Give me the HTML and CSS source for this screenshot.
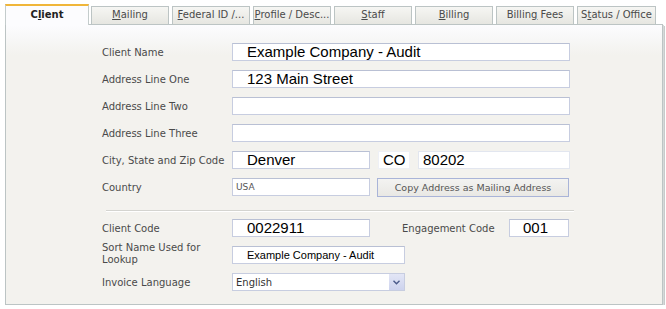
FILE: index.html
```html
<!DOCTYPE html>
<html lang="en">
<head>
  <meta charset="UTF-8" />
  <title>Client</title>
  <link rel="stylesheet" href="styles.css">
</head>
<body>
  <div class="window">
    <div class="tabs">
      <div class="tab active">C<u>l</u>ient</div>
      <div class="tab"><u>M</u>ailing</div>
      <div class="tab"><u>F</u>ederal ID /...</div>
      <div class="tab"><u>P</u>rofile / Desc...</div>
      <div class="tab"><u>S</u>taff</div>
      <div class="tab"><u>B</u>illing</div>
      <div class="tab">Billin<u>g</u> Fees</div>
      <div class="tab">S<u>t</u>atus / Office</div>
    </div>

    <div class="panel">
      <div class="form">
        <div class="row">
          <label>Client Name</label>
          <div class="field big w-full">Example Company - Audit</div>
        </div>
        <div class="row">
          <label>Address Line One</label>
          <div class="field big w-full">123 Main Street</div>
        </div>
        <div class="row">
          <label>Address Line Two</label>
          <div class="field w-full"></div>
        </div>
        <div class="row">
          <label>Address Line Three</label>
          <div class="field w-full"></div>
        </div>
        <div class="row">
          <label>City, State and Zip Code</label>
          <div class="field big w-half">Denver</div>
          <div class="field big state">CO</div>
          <div class="field big zip">80202</div>
        </div>
        <div class="row">
          <label>Country</label>
          <div class="field small w-half">USA</div>
          <button class="copy-btn">Copy Address as Mailing Address</button>
        </div>

        <div class="separator"></div>

        <div class="row">
          <label>Client Code</label>
          <div class="field big w-half">0022911</div>
          <label class="eng-label">Engagement Code</label>
          <div class="field big eng">001</div>
        </div>
        <div class="row">
          <label class="two-line">Sort Name Used for Lookup</label>
          <div class="field sort w-sort">Example Company - Audit</div>
        </div>
        <div class="row">
          <label>Invoice Language</label>
          <div class="select w-sort">
            <span class="select-text">English</span>
            <span class="select-arrow">
              <svg width="7" height="5" viewBox="0 0 7 5"><path d="M0.5 0.8 L3.5 3.8 L6.5 0.8" fill="none" stroke="#4a5a8a" stroke-width="1.4"/></svg>
            </span>
          </div>
        </div>
      </div>
    </div>
  </div>
</body>
</html>
```

FILE: styles.css
```css
body {
  margin: 0;
  background: #ffffff;
  font-family: "DejaVu Sans", Verdana, sans-serif;
  font-size: 10px;
  color: #3c3c3c;
}

.window {
  padding: 4px 4px 0 5px;
  width: 658px;
}

.tabs {
  display: flex;
  align-items: flex-end;
  height: 20px;
  padding-left: 0;
}

.tab {
  box-sizing: border-box;
  height: 18px;
  width: 78px;
  margin-right: 3px;
  border: 1px solid #bcc4c4;
  border-bottom: none;
  background: linear-gradient(#f6f6f3, #e6e6e1);
  text-align: center;
  line-height: 16px;
  font-size: 10px;
  color: #4a4a4a;
  white-space: nowrap;
  overflow: hidden;
}

.tab.active {
  width: 84px;
  height: 21px;
  margin-right: 2px;
  border-top: 2px solid #f0b63a;
  border-left: 1px solid #c4cccc;
  border-right: 1px solid #c4cccc;
  background: #fcfcfe;
  font-weight: bold;
  color: #222;
  line-height: 17px;
  position: relative;
  z-index: 1;
  margin-bottom: -1px;
}

.tab:last-child {
  width: 79px;
  margin-right: 0;
}

.panel {
  box-sizing: border-box;
  width: 658px;
  height: 281px;
  border: 1px solid #bcc4c4;
  background: linear-gradient(#fcfcfe 0, #f8f8f8 12px, #f3f2ee 30px);
  box-shadow: 1px 1px 0 #d6d9d9, 2px 2px 0 #c7cbcb;
}

.form {
  padding: 18px 0 0 96px;
  display: flex;
  flex-direction: column;
  gap: 9px;
}

.row {
  display: flex;
  align-items: center;
  height: 18px;
}

.row label {
  width: 130px;
  flex: none;
  font-size: 10px;
  color: #4a4a4a;
  white-space: nowrap;
}

.row label.two-line {
  white-space: normal;
  width: 110px;
  margin-right: 20px;
  line-height: 12px;
  margin-top: -2px;
}

.field {
  box-sizing: border-box;
  height: 18px;
  border: 1px solid #c7cde0;
  border-top-color: #b9c0d4;
  background: #ffffff;
  color: #000;
  font-family: "Liberation Sans", Arial, sans-serif;
  white-space: nowrap;
  overflow: hidden;
}

.field.big {
  font-size: 15px;
  line-height: 16px;
  padding-left: 14px;
}

.field.small {
  font-family: "DejaVu Sans", Verdana, sans-serif;
  font-size: 9px;
  color: #555;
  line-height: 16px;
  padding-left: 3px;
}

.field.sort {
  font-size: 11px;
  line-height: 16px;
  padding-left: 14px;
}

.w-full { width: 338px; }
.w-half { width: 138px; }
.w-sort { width: 173px; }

.field.state {
  width: 32px;
  margin-left: 8px;
  border-color: #eef0f6;
  padding-left: 4px;
}

.field.zip {
  width: 152px;
  margin-left: 8px;
  border-color: #e2e6ef;
  padding-left: 4px;
}

.copy-btn {
  box-sizing: border-box;
  height: 19px;
  width: 192px;
  margin-left: 7px;
  border: 1px solid #a9b4d8;
  background: linear-gradient(#f3f3f1, #e9e8e4);
  font-family: "DejaVu Sans", Verdana, sans-serif;
  font-size: 9.5px;
  color: #555;
  padding: 0;
}

.separator {
  width: 468px;
  height: 0;
  border-top: 1px solid #d4d4d0;
  border-bottom: 1px solid #ffffff;
  margin: 5px 0 -2px 4px;
}

.eng-label {
  margin-left: 32px;
}

.row label.eng-label {
  width: 107px;
}

.field.eng {
  width: 60px;
  padding-left: 13px;
}

.select {
  box-sizing: border-box;
  height: 18px;
  border: 1px solid #c7cde0;
  background: #ffffff;
  display: flex;
  align-items: center;
  justify-content: space-between;
}

.select-text {
  padding-left: 3px;
  font-size: 10px;
  color: #333;
}

.select-arrow {
  width: 15px;
  height: 16px;
  background: linear-gradient(#e3e6f6, #cdd3ee);
  display: flex;
  align-items: center;
  justify-content: center;
}
```
